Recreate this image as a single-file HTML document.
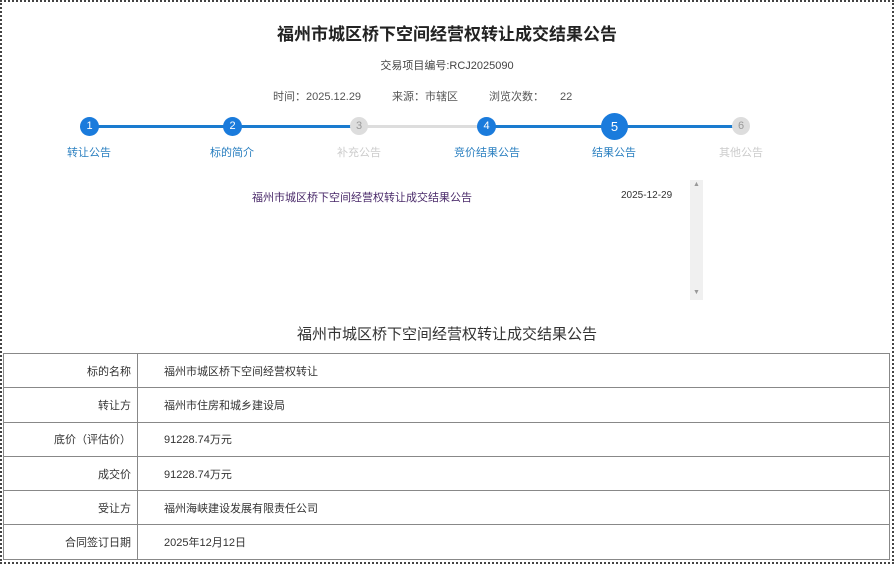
<!DOCTYPE html>
<html><head><meta charset="utf-8"><style>
*{margin:0;padding:0;box-sizing:border-box}
body{width:894px;height:564px;background:#fff;font-family:"Liberation Sans","Noto Sans CJK SC",sans-serif;position:relative;overflow:hidden;color:#333}
.frame{position:absolute;left:0;top:0;width:894px;height:564px;border:2px dotted #444}
.a{position:absolute;white-space:nowrap}
.c{position:absolute;border-radius:50%;color:#fff;font-size:11px;text-align:center}
.line{position:absolute;height:3px;top:125px}
.lbl{position:absolute;top:144px;font-size:11px;transform:translateX(-50%)}
table{position:absolute;left:3px;top:353px;width:887px;border-collapse:collapse;font-size:11px}
td{border:1px solid #888;height:34.3px;color:#333}
td.k{width:134px;text-align:right;padding-right:6px}
td.v{padding-left:26px}
</style></head><body>
<div class="a" style="left:0;width:894px;text-align:center;top:20px;font-size:17px;font-weight:bold;color:#222">福州市城区桥下空间经营权转让成交结果公告</div>
<div class="a" style="left:0;width:894px;text-align:center;top:57px;font-size:11px;color:#444">交易项目编号:RCJ2025090</div>
<div class="a" style="left:273px;top:88px;font-size:11px;color:#555">时间：2025.12.29</div>
<div class="a" style="left:392px;top:88px;font-size:11px;color:#555">来源：市辖区</div>
<div class="a" style="left:489px;top:88px;font-size:11px;color:#555">浏览次数：</div>
<div class="a" style="left:560px;top:89px;font-size:11px;color:#555;line-height:16px">22</div>

<div class="line" style="left:89px;width:270px;background:#1a7bcf"></div>
<div class="line" style="left:359px;width:127px;background:#ddd"></div>
<div class="line" style="left:486px;width:255px;background:#1a7bcf"></div>
<div class="c" style="left:80px;top:117px;width:19px;height:19px;line-height:19px;background:#1a7bdc">1</div>
<div class="c" style="left:223px;top:117px;width:19px;height:19px;line-height:19px;background:#1a7bdc">2</div>
<div class="c" style="left:350px;top:117px;width:18px;height:18px;line-height:18px;background:#ddd;color:#999">3</div>
<div class="c" style="left:477px;top:117px;width:19px;height:19px;line-height:19px;background:#1a7bdc">4</div>
<div class="c" style="left:601px;top:113px;width:27px;height:27px;line-height:27px;background:#1a7bdc;font-size:13px">5</div>
<div class="c" style="left:732px;top:117px;width:18px;height:18px;line-height:18px;background:#ddd;color:#999">6</div>
<div class="lbl" style="left:89px;color:#2a7fc0">转让公告</div>
<div class="lbl" style="left:232px;color:#2a7fc0">标的简介</div>
<div class="lbl" style="left:359px;color:#ccc">补充公告</div>
<div class="lbl" style="left:487px;color:#2a7fc0">竞价结果公告</div>
<div class="lbl" style="left:614px;color:#2a7fc0">结果公告</div>
<div class="lbl" style="left:741px;color:#ccc">其他公告</div>

<div class="a" style="left:252px;top:189px;font-size:11px;color:#4a2a6a">福州市城区桥下空间经营权转让成交结果公告</div>
<div class="a" style="left:621px;top:190px;font-size:10px;color:#333">2025-12-29</div>
<div style="position:absolute;left:690px;top:180px;width:13px;height:120px;background:#f0f0f0"></div>
<div class="a" style="left:693px;top:181px;font-size:7px;color:#999">▲</div>
<div class="a" style="left:693px;top:289px;font-size:7px;color:#999">▼</div>

<div class="a" style="left:0;width:894px;text-align:center;top:323px;font-size:15px;color:#333">福州市城区桥下空间经营权转让成交结果公告</div>
<table>
<tr><td class="k">标的名称</td><td class="v">福州市城区桥下空间经营权转让</td></tr>
<tr><td class="k">转让方</td><td class="v">福州市住房和城乡建设局</td></tr>
<tr><td class="k">底价（评估价）</td><td class="v">91228.74万元</td></tr>
<tr><td class="k">成交价</td><td class="v">91228.74万元</td></tr>
<tr><td class="k">受让方</td><td class="v">福州海峡建设发展有限责任公司</td></tr>
<tr><td class="k">合同签订日期</td><td class="v">2025年12月12日</td></tr>
</table>
<div class="frame"></div>
</body></html>
